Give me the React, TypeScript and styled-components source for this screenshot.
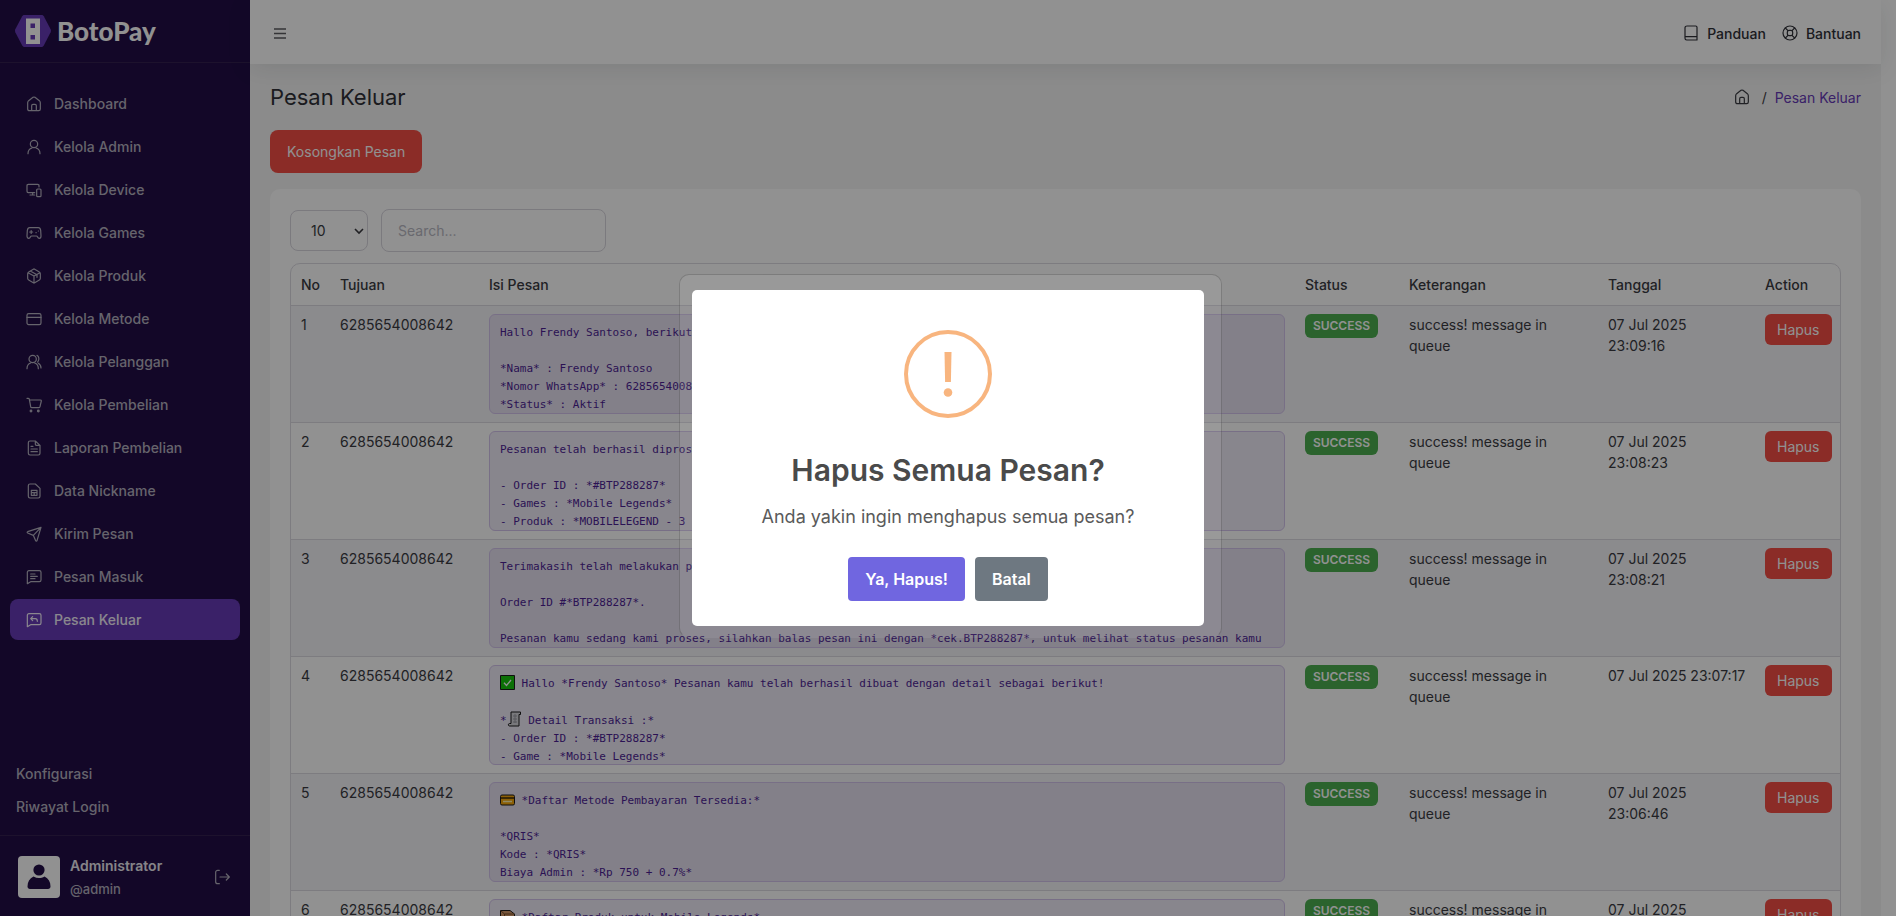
import React from 'react';
import styled, { createGlobalStyle, css } from 'styled-components';

const GlobalStyle = createGlobalStyle`
  *, *::before, *::after { box-sizing: border-box; }
  body {
    margin: 0;
    overflow: hidden;
    background: #ffffff;
    color: #3a3b42;
    font-family: Inter, 'Liberation Sans', sans-serif;
    font-size: 14px;
    line-height: 21px;
  }
  a { color: inherit; text-decoration: none; }
  button, input, select { font: inherit; }
`;

/* ---------- Page shell ---------- */

const Page = styled.div`
  display: flex;
  height: 100vh;
  padding-right: 15px;
  overflow: hidden;
`;

const Sidebar = styled.aside`
  display: flex;
  flex-direction: column;
  flex: 0 0 250px;
  height: 100vh;
  background: #220e47;
  color: #b4b0bf;
  font-weight: 500;
`;

const Brand = styled.a`
  display: flex;
  align-items: center;
  gap: 5px;
  height: 63px;
  padding: 0 14px;
  border-bottom: 1px solid #33214f;
  color: #ffffff;
  font-family: Lato, sans-serif;
  font-size: 26px;
  font-weight: 900;
`;

const Menu = styled.nav`
  display: flex;
  flex-direction: column;
  flex: 1;
  gap: 2px;
  padding: 20px 10px;
`;

const MenuLink = styled.a<{ $active?: boolean }>`
  display: flex;
  align-items: center;
  gap: 12px;
  height: 41px;
  padding: 0 16px;
  border-radius: 8px;
  ${(p) =>
    p.$active &&
    css`
      background: #673ab7;
      color: #f2eefa;
    `}
`;

const ExtraLinks = styled.nav`
  display: flex;
  flex-direction: column;
  gap: 12px;
  padding: 0 16px 18px;
`;

const Account = styled.div`
  display: flex;
  align-items: center;
  gap: 10px;
  height: 81px;
  padding: 2px 20px 0 18px;
  border-top: 1px solid #33214f;
`;

const Avatar = styled.span`
  display: grid;
  place-items: center;
  width: 42px;
  height: 42px;
  border-radius: 4px;
  background: #ffffff;
`;

const AccountText = styled.div`
  display: flex;
  flex-direction: column;
  flex: 1;
  gap: 3px;
`;

const AccountName = styled.strong`
  color: #ebe9f0;
  font-weight: 600;
`;

const AccountHandle = styled.span`
  font-size: 13px;
`;

const IconButton = styled.button`
  display: grid;
  place-items: center;
  padding: 0;
  border: 0;
  background: none;
  color: inherit;
`;

const Main = styled.div`
  flex: 1;
  min-width: 0;
  background: #f5f5f5;
`;

const TopBar = styled.header`
  display: flex;
  align-items: center;
  justify-content: space-between;
  height: 64px;
  padding: 2px 20px 0 22px;
  background: #ffffff;
  box-shadow: 0 4px 24px rgba(34, 41, 47, 0.1);
  color: #5c5c62;
`;

const TopLinks = styled.nav`
  display: flex;
  gap: 16px;
`;

const TopLink = styled.a`
  display: flex;
  align-items: center;
  gap: 8px;
  color: #303138;
  font-weight: 500;
`;

const Content = styled.main`
  display: flex;
  flex-direction: column;
  align-items: flex-start;
  padding: 18px 20px;
`;

const Heading = styled.div`
  display: flex;
  align-items: center;
  justify-content: space-between;
  width: 100%;
  height: 30px;
  margin-bottom: 18px;
`;

const Title = styled.h1`
  margin: 0;
  color: #303138;
  font-size: 22px;
  font-weight: 400;
  line-height: 30px;
`;

const Crumbs = styled.nav`
  display: flex;
  align-items: center;
  gap: 8px;
`;

const HomeCrumb = styled.a`
  display: flex;
  margin-right: 4px;
`;

const CurrentCrumb = styled.a`
  color: #673ab7;
`;

const DangerButton = styled.button<{ $small?: boolean }>`
  height: ${(p) => (p.$small ? 31 : 43)}px;
  padding: 0 ${(p) => (p.$small ? 12 : 17)}px;
  border: 0;
  border-radius: ${(p) => (p.$small ? 6 : 8)}px;
  background: #f44e46;
  color: #ffffff;
  font-weight: 400;
`;

const Card = styled.section`
  width: 100%;
  margin-top: 16px;
  padding: 20px;
  border-radius: 10px;
  background: #ffffff;
`;

const Filters = styled.div`
  display: flex;
  align-items: center;
  gap: 13px;
  margin-bottom: 11px;
`;

const SelectWrap = styled.div`
  display: grid;
  align-items: center;
  width: 78px;
  & > * { grid-area: 1 / 1; }
  & > svg { justify-self: end; margin-right: 4px; pointer-events: none; }
`;

const PageSize = styled.select`
  width: 100%;
  height: 41px;
  padding: 0 20px;
  appearance: none;
  border: 1px solid #d8d6de;
  border-radius: 8px;
  background: transparent;
  color: #3a3b42;
`;

const Search = styled.input`
  width: 225px;
  height: 43px;
  padding: 0 16px;
  border: 1px solid #d8d6de;
  border-radius: 8px;
  background: transparent;
  &::placeholder { color: #b9b9c3; opacity: 1; }
`;

/* ---------- Message table ---------- */

const TableFrame = styled.div`
  overflow: hidden;
  border: 1px solid #dcdae2;
  border-radius: 10px;
`;

const Table = styled.table`
  width: 100%;
  table-layout: fixed;
  border-collapse: separate;
  border-spacing: 0;
`;

const HeadCell = styled.th<{ $width?: number }>`
  width: ${(p) => (p.$width ? `${p.$width}px` : 'auto')};
  height: 42px;
  padding: 0 10px;
  border-bottom: 1px solid #dcdae2;
  color: #3a3b42;
  font-weight: 500;
  text-align: left;
`;

const Row = styled.tr`
  &:nth-child(odd) { background: #f5f4f8; }
`;

const Cell = styled.td`
  padding: 8px 10px;
  border-bottom: 1px solid #dcdae2;
  vertical-align: top;
  white-space: pre;
`;

const Message = styled.pre`
  height: 100px;
  margin: 0;
  padding: 9px 10px;
  overflow: hidden;
  border: 1px solid #d3c4ec;
  border-radius: 6px;
  background: rgba(103, 58, 183, 0.1);
  color: #4d1f94;
  font-family: 'DejaVu Sans Mono', 'Liberation Mono', monospace;
  font-size: 11px;
  line-height: 18px;
  & svg { vertical-align: -3px; }
`;

const Badge = styled.span`
  display: block;
  width: 73px;
  border-radius: 6px;
  background: #4caf50;
  color: #ffffff;
  font-size: 12px;
  font-weight: 600;
  line-height: 24px;
  text-align: center;
`;

/* ---------- Confirmation dialog ---------- */

const Backdrop = styled.div`
  position: fixed;
  inset: 0;
  display: grid;
  place-items: center;
  background: rgba(0, 0, 0, 0.43);
`;

const PopupStack = styled.div`
  position: relative;
`;

const FadingPanel = styled.div`
  position: absolute;
  inset: -16px -18px -12px -13px;
  border: 1px solid rgba(40, 40, 40, 0.25);
  border-bottom-color: transparent;
  border-radius: 10px;
  background: rgba(255, 255, 255, 0.07);
`;

const Popup = styled.div`
  position: relative;
  display: flex;
  flex-direction: column;
  align-items: center;
  width: 512px;
  max-width: calc(100vw - 32px);
  padding: 40px 20px 25px;
  border-radius: 5px;
  background: #ffffff;
  color: #5a5a5a;
`;

const PopupTitle = styled.h2`
  margin: 33px 0 0;
  color: #4a4a4a;
  font-size: 30px;
  font-weight: 600;
  line-height: 38px;
`;

const PopupText = styled.p`
  margin: 16px 0 0;
  font-size: 18px;
  line-height: 24px;
`;

const PopupActions = styled.div`
  display: flex;
  gap: 10px;
  margin-top: 28px;
`;

const PopupButton = styled.button<{ $tone: string }>`
  height: 44px;
  padding: 0 17px;
  border: 0;
  border-radius: 4px;
  background: ${(p) => p.$tone};
  color: #ffffff;
  font-size: 16px;
  font-weight: 600;
`;

/* ---------- Icons, all on a 48 unit grid ---------- */

type IconProps = { size?: number; children: React.ReactNode };

const Icon = ({ size = 16, children }: IconProps) => (
  <svg
    width={size}
    height={size}
    viewBox="0 0 48 48"
    fill="none"
    stroke="currentColor"
    strokeWidth="3.6"
    strokeLinecap="round"
    strokeLinejoin="round"
    aria-hidden="true"
  >
    {children}
  </svg>
);

const homeShape = (
  <>
    <path d="M5 20c0-3 1-4 3-6L21 4c2-1 4-1 6 0l13 10c2 2 3 3 3 6v19c0 3-2 5-5 5H10c-3 0-5-2-5-5z" />
    <path d="M17 43V29c0-3 2-4 4-4h6c2 0 4 1 4 4v14" />
  </>
);

const icons = {
  home: homeShape,
  user: (
    <>
      <circle cx="24" cy="15" r="11" />
      <path d="M6 44c0-9 5-15 12-17M42 44c0-9-5-15-12-17" />
    </>
  ),
  device: (
    <>
      <path d="M39 15v-4c0-3-1-4-4-4H7c-3 0-4 1-4 4v17c0 3 1 4 4 4h19M20 32v7M12 39h14" />
      <rect x="32" y="21" width="13" height="23" rx="3" />
    </>
  ),
  game: (
    <>
      <path d="M11 8h26c4 0 6 2 7 8l1 17c0 4-2 7-5 7-2 0-4-1-5-4-1-2-2-3-4-3H17c-2 0-3 1-4 3-1 3-3 4-5 4-3 0-5-3-5-7l1-17c1-6 3-8 7-8z" />
      <path d="M11 21h9M15.500 16.500v9M30 23h.5M37 18h.5" />
    </>
  ),
  box: (
    <>
      <path d="M26 4l14 8c2 1 3 3 3 5v14c0 2-1 4-3 5l-14 8c-1 1-3 1-4 0L8 36c-2-1-3-3-3-5V17c0-2 1-4 3-5l14-8c1-1 3-1 4 0zM24 24v20M6 14l18 10 18-10M14 10l19 10v8" />
    </>
  ),
  card: (
    <>
      <rect x="3" y="8" width="42" height="33" rx="5" />
      <path d="M3 19h42" />
    </>
  ),
  users: (
    <>
      <circle cx="20" cy="15" r="11" />
      <path d="M3 44c0-9 4-15 11-17M37 44c0-9-4-15-11-17M33 4c6 2 8 14 2 20M37 28c5 3 8 8 8 14" />
    </>
  ),
  cart: (
    <>
      <path d="M3 4h4c2 0 3 1 3 3l4 22c0 2 2 3 4 3h20c2 0 3-1 4-3l4-17c0-2-1-3-3-3H11" />
      <circle cx="15" cy="42" r="2.500" fill="currentColor" />
      <circle cx="37" cy="42" r="2.500" fill="currentColor" />
    </>
  ),
  report: (
    <>
      <path d="M28 3H12C9 3 7 5 7 8v32c0 3 2 5 5 5h25c3 0 5-2 5-5V16zM28 3v10c0 2 1 3 3 3h11M15 19h6M15 27h19M15 35h19" />
    </>
  ),
  data: (
    <>
      <path d="M28 3H12C9 3 7 5 7 8v32c0 3 2 5 5 5h25c3 0 5-2 5-5V16z" />
      <path d="M16 22h17v15H16zM16 29h17M24.500 29v8" />
    </>
  ),
  send: (
    <>
      <path d="M45 4L5 17c-2 1-2 3 0 4l17 7 7 16c1 2 3 2 4 0zM45 4L22 28" />
    </>
  ),
  inbox: (
    <>
      <path d="M9 5h31c3 0 5 2 5 5v23c0 3-2 5-5 5H14L4 44V10c0-3 2-5 5-5zM14 15h13M14 22h20M14 29h13" />
    </>
  ),
  outbox: (
    <>
      <path d="M9 5h31c3 0 5 2 5 5v23c0 3-2 5-5 5H14L4 44V10c0-3 2-5 5-5z" />
      <path d="M20 14l-6 6 6 6M15 20h13c4 0 6 2 6 8" />
    </>
  ),
  logout: (
    <>
      <path d="M16 4h-5C8 4 5 6 5 10v28c0 4 3 6 6 6h5M18 24h27M37 15l9 9-9 9" />
    </>
  ),
  book: (
    <>
      <path d="M12 3h26c2 0 4 2 4 4v38H11c-3 0-5-2-5-5V8c0-3 3-5 6-5zM6 35h36" />
    </>
  ),
  help: (
    <>
      <circle cx="24" cy="24" r="21" />
      <rect x="16" y="16" width="16" height="16" rx="5" />
      <path d="M10 9l8 8M38 9l-8 8M10 39l8-8M38 39l-8-8" />
    </>
  ),
};

type IconName = keyof typeof icons;

const LogoMark = () => (
  <svg width="38" height="34" viewBox="0 0 38 34" aria-hidden="true">
    <path
      d="M10.500 1h17c1 0 1.800.5 2.300 1.300l6.800 13c.5 1 .5 2 0 3l-6.800 13.200c-.5.900-1.300 1.500-2.300 1.500h-17c-1 0-1.800-.6-2.300-1.500L1.300 18.300c-.5-1-.5-2 0-3L8.200 2.300C8.700 1.500 9.500 1 10.500 1z"
      fill="#673ab7"
    />
    <path d="M12 4.500h14v25.500H12z" fill="#ffffff" />
    <path d="M16.500 9.500h4.500v4.500h-4.500zM16.500 21h4.500v4.500h-4.500z" fill="#673ab7" />
  </svg>
);

const AvatarFigure = () => (
  <svg width="24" height="26" viewBox="0 0 24 26" fill="#220e47" aria-hidden="true">
    <circle cx="12" cy="6" r="5.600" />
    <path d="M6.500 12.500c3.500 2 7.500 2 11 0 4 2 6 5.500 6 10 0 1.500-1 2.500-2.500 2.500H3C1.500 25 .5 24 .5 22.500c0-4.500 2-8 6-10z" />
  </svg>
);

const CheckEmoji = () => (
  <svg width="15" height="15" viewBox="0 0 15 15" role="img" aria-label="centang">
    <path d="M.5.5h14v14H.5z" fill="#16c60c" stroke="#1b1b1b" />
    <path d="M4 7.800l2.500 2.700L11 5" fill="none" stroke="#ffffff" strokeWidth="1.300" />
  </svg>
);

const ReceiptEmoji = () => (
  <svg width="15" height="16" viewBox="0 0 15 16" role="img" aria-label="struk">
    <path d="M4 1h9.500v2.500H12V15H2.500c-1.500 0-1.500-2.500 0-2.500H4z" fill="#d5d5da" stroke="#1b1b1b" />
    <path d="M6 5h4M6 8h4M6 11h4M8 3v9" stroke="#9a9aa2" fill="none" />
  </svg>
);

const CardEmoji = () => (
  <svg width="15" height="15" viewBox="0 0 15 15" role="img" aria-label="kartu">
    <rect x=".5" y="3" width="14" height="10" rx="1.500" fill="#f5a70b" stroke="#1b1b1b" />
    <path d="M1 6h13" stroke="#3b2a05" strokeWidth="1.500" />
    <path d="M3 9.500h9" stroke="#fff3b0" strokeWidth="1.500" />
  </svg>
);

const BoxEmoji = () => (
  <svg width="15" height="15" viewBox="0 0 15 15" role="img" aria-label="paket">
    <path d="M.5 1.500h9.500L14.500 5v9.500H4.500L.5 11z" fill="#d39a6a" stroke="#1b1b1b" />
    <path d="M.5 1.500L4.500 5h10M4.500 5v9" fill="none" stroke="#7a4b25" />
  </svg>
);

const WarningIcon = () => (
  <svg width="88" height="88" viewBox="0 0 88 88" aria-hidden="true">
    <circle cx="44" cy="44" r="42" fill="none" stroke="#f8b57f" strokeWidth="4" />
    <path d="M40.500 22h7l-.6 30h-5.800z" fill="#f8b57f" />
    <circle cx="44" cy="62.500" r="4.300" fill="#f8b57f" />
  </svg>
);

/* ---------- Data ---------- */

const menu: { label: string; icon: IconName; active?: boolean }[] = [
  { label: 'Dashboard', icon: 'home' },
  { label: 'Kelola Admin', icon: 'user' },
  { label: 'Kelola Device', icon: 'device' },
  { label: 'Kelola Games', icon: 'game' },
  { label: 'Kelola Produk', icon: 'box' },
  { label: 'Kelola Metode', icon: 'card' },
  { label: 'Kelola Pelanggan', icon: 'users' },
  { label: 'Kelola Pembelian', icon: 'cart' },
  { label: 'Laporan Pembelian', icon: 'report' },
  { label: 'Data Nickname', icon: 'data' },
  { label: 'Kirim Pesan', icon: 'send' },
  { label: 'Pesan Masuk', icon: 'inbox' },
  { label: 'Pesan Keluar', icon: 'outbox', active: true },
];

const messages: { body: React.ReactNode; date: string }[] = [
  {
    body: 'Hallo Frendy Santoso, berikut\n\n*Nama* : Frendy Santoso\n*Nomor WhatsApp* : 6285654008642\n*Status* : Aktif',
    date: '07 Jul 2025\n23:09:16',
  },
  {
    body: 'Pesanan telah berhasil diproses\n\n- Order ID : *#BTP288287*\n- Games : *Mobile Legends*\n- Produk : *MOBILELEGEND - 3',
    date: '07 Jul 2025\n23:08:23',
  },
  {
    body: 'Terimakasih telah melakukan pesanan\n\nOrder ID #*BTP288287*.\n\nPesanan kamu sedang kami proses, silahkan balas pesan ini dengan *cek.BTP288287*, untuk melihat status pesanan kamu',
    date: '07 Jul 2025\n23:08:21',
  },
  {
    body: (
      <>
        <CheckEmoji />
        {' Hallo *Frendy Santoso* Pesanan kamu telah berhasil dibuat dengan detail sebagai berikut!\n\n*'}
        <ReceiptEmoji />
        {' Detail Transaksi :*\n- Order ID : *#BTP288287*\n- Game : *Mobile Legends*'}
      </>
    ),
    date: '07 Jul 2025 23:07:17',
  },
  {
    body: (
      <>
        <CardEmoji />
        {' *Daftar Metode Pembayaran Tersedia:*\n\n*QRIS*\nKode : *QRIS*\nBiaya Admin : *Rp 750 + 0.7%*'}
      </>
    ),
    date: '07 Jul 2025\n23:06:46',
  },
  {
    body: (
      <>
        <BoxEmoji />
        {' *Daftar Produk untuk Mobile Legends*'}
      </>
    ),
    date: '07 Jul 2025',
  },
];

export default function App() {
  return (
    <>
      <GlobalStyle />
      <Page>
        <Sidebar>
          <Brand href="#">
            <LogoMark />
            BotoPay
          </Brand>
          <Menu>
            {menu.map((item) => (
              <MenuLink key={item.label} href="#" $active={item.active}>
                <Icon>{icons[item.icon]}</Icon>
                {item.label}
              </MenuLink>
            ))}
          </Menu>
          <ExtraLinks>
            <a href="#">Konfigurasi</a>
            <a href="#">Riwayat Login</a>
          </ExtraLinks>
          <Account>
            <Avatar>
              <AvatarFigure />
            </Avatar>
            <AccountText>
              <AccountName>Administrator</AccountName>
              <AccountHandle>@admin</AccountHandle>
            </AccountText>
            <IconButton aria-label="Keluar">
              <Icon>{icons.logout}</Icon>
            </IconButton>
          </Account>
        </Sidebar>

        <Main>
          <TopBar>
            <IconButton aria-label="Menu">
              <svg width="16" height="16" viewBox="0 0 16 16" aria-hidden="true">
                <path d="M2 4h12M2 8.500h12M2 13h12" stroke="currentColor" strokeWidth="1.600" />
              </svg>
            </IconButton>
            <TopLinks>
              <TopLink href="#">
                <Icon>{icons.book}</Icon>
                Panduan
              </TopLink>
              <TopLink href="#">
                <Icon>{icons.help}</Icon>
                Bantuan
              </TopLink>
            </TopLinks>
          </TopBar>

          <Content>
            <Heading>
              <Title>Pesan Keluar</Title>
              <Crumbs aria-label="Breadcrumb">
                <HomeCrumb href="#" aria-label="Dashboard">
                  <Icon>{icons.home}</Icon>
                </HomeCrumb>
                <span>/</span>
                <CurrentCrumb href="#">Pesan Keluar</CurrentCrumb>
              </Crumbs>
            </Heading>
            <DangerButton>Kosongkan Pesan</DangerButton>

            <Card>
              <Filters>
                <SelectWrap>
                  <PageSize aria-label="Jumlah baris" defaultValue="10">
                    <option>10</option>
                    <option>25</option>
                    <option>50</option>
                  </PageSize>
                  <svg width="10" height="8" viewBox="0 0 10 8" aria-hidden="true">
                    <path d="M1 2l4 4 4-4" fill="none" stroke="#3a3a40" strokeWidth="1.600" />
                  </svg>
                </SelectWrap>
                <Search type="search" placeholder="Search..." aria-label="Search" />
              </Filters>
              <TableFrame>
                <Table>
                  <thead>
                    <tr>
                      <HeadCell $width={39}>No</HeadCell>
                      <HeadCell $width={149}>Tujuan</HeadCell>
                      <HeadCell>Isi Pesan</HeadCell>
                      <HeadCell $width={104}>Status</HeadCell>
                      <HeadCell $width={199}>Keterangan</HeadCell>
                      <HeadCell $width={157}>Tanggal</HeadCell>
                      <HeadCell $width={85}>Action</HeadCell>
                    </tr>
                  </thead>
                  <tbody>
                    {messages.map((message, index) => (
                      <Row key={index}>
                        <Cell>{index + 1}</Cell>
                        <Cell>6285654008642</Cell>
                        <Cell>
                          <Message>{message.body}</Message>
                        </Cell>
                        <Cell>
                          <Badge>SUCCESS</Badge>
                        </Cell>
                        <Cell>{'success! message in\nqueue'}</Cell>
                        <Cell>{message.date}</Cell>
                        <Cell>
                          <DangerButton $small>Hapus</DangerButton>
                        </Cell>
                      </Row>
                    ))}
                  </tbody>
                </Table>
              </TableFrame>
            </Card>
          </Content>
        </Main>
      </Page>

      <Backdrop>
        <PopupStack>
          <FadingPanel />
          <Popup role="alertdialog" aria-modal="true" aria-labelledby="popup-title" aria-describedby="popup-text">
            <WarningIcon />
            <PopupTitle id="popup-title">Hapus Semua Pesan?</PopupTitle>
            <PopupText id="popup-text">Anda yakin ingin menghapus semua pesan?</PopupText>
            <PopupActions>
              <PopupButton $tone="#7066e0">Ya, Hapus!</PopupButton>
              <PopupButton $tone="#6e7881">Batal</PopupButton>
            </PopupActions>
          </Popup>
        </PopupStack>
      </Backdrop>
    </>
  );
}
